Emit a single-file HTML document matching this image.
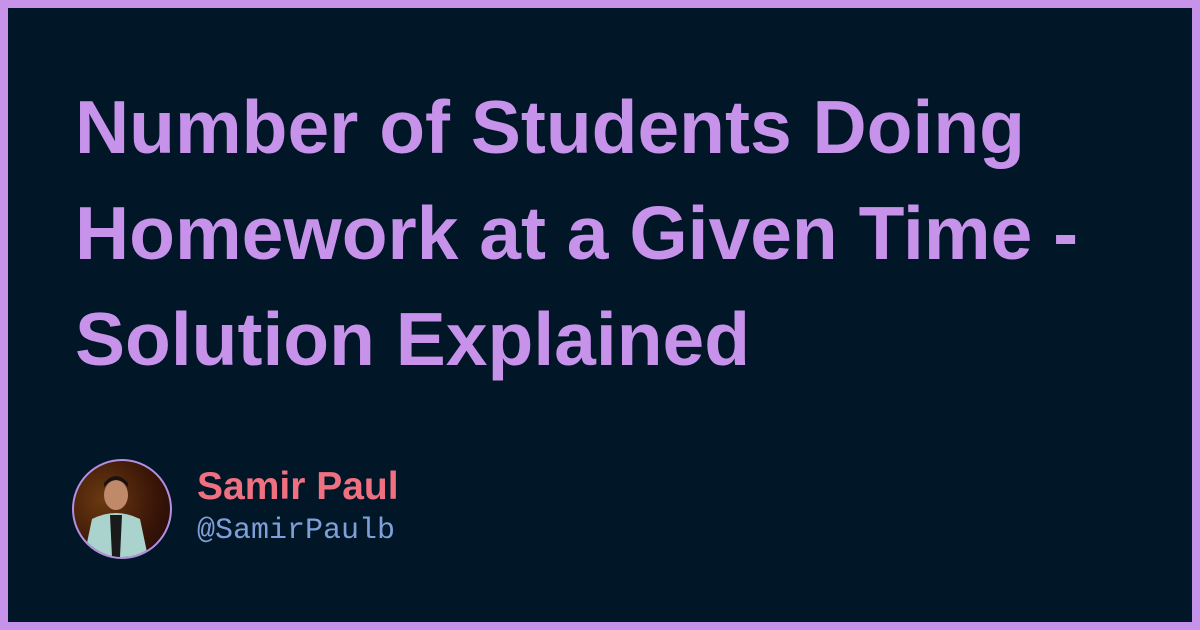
<!DOCTYPE html>
<html><head><style>
html,body{margin:0;padding:0}
body{width:1200px;height:630px;background:#c792ea;position:relative;overflow:hidden}
.in{position:absolute;left:8px;top:8px;width:1184px;height:614px;background:#011627}
h1{position:absolute;left:75px;top:74px;margin:0;width:1110px;font-family:"Liberation Sans",sans-serif;font-weight:bold;font-size:75px;line-height:106px;color:#c792ea}
.av{position:absolute;left:72px;top:459px;width:96px;height:96px;border-radius:50%;border:2px solid #b48ee0;overflow:hidden;background:radial-gradient(circle at 30% 40%,#6a3a10,#3a1508 60%,#1a0a08)}
.name{position:absolute;left:197px;top:465px;font-family:"Liberation Sans",sans-serif;font-size:39px;color:#ef7080;font-weight:bold}
.h{position:absolute;left:197px;top:514px;font-family:"Liberation Mono",monospace;font-size:30px;color:#7f9fd8}
</style></head><body><div class="in"></div>
<h1>Number of Students Doing Homework at a Given Time - Solution Explained</h1>
<div class="av"><svg width="96" height="96"><ellipse cx="42" cy="34" rx="12" ry="15" fill="#c08a6a"/><path d="M30 26 Q42 12 54 26 L54 22 Q42 8 30 22Z" fill="#1a1210"/><path d="M10 96 L18 58 Q42 46 66 58 L74 96Z" fill="#a9d3cc"/><path d="M36 54 L48 54 L46 96 L38 96Z" fill="#1a1a1a"/></svg></div>
<div class="name">Samir Paul</div>
<div class="h">@SamirPaulb</div>
</body></html>
